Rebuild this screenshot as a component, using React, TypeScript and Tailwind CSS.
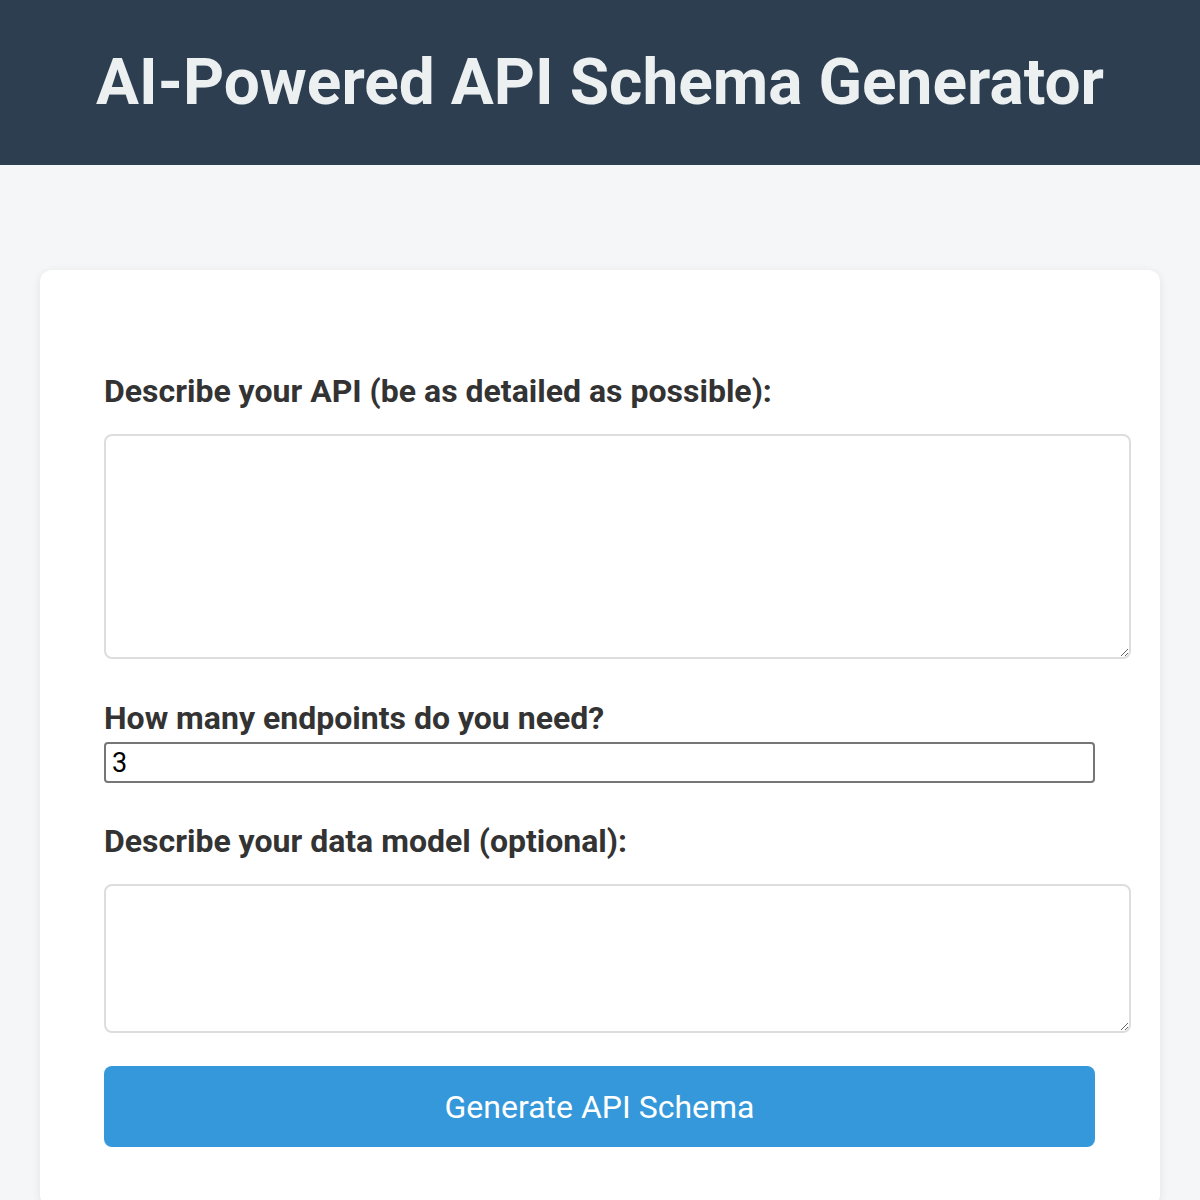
import { useState } from "react";

export default function App() {
  const [description, setDescription] = useState("");
  const [endpoints, setEndpoints] = useState("3");
  const [model, setModel] = useState("");

  return (
    <div className="min-h-[1200px] bg-[#f4f6f8] font-['Roboto',sans-serif]">
      {/* HEADER */}
      <header className="h-[165px] bg-[#2c3e50] flex items-center justify-center">
        <h1 className="text-[64px] font-bold text-[#ecf0f1] leading-none">
          AI-Powered API Schema Generator
        </h1>
      </header>

      {/* FORM CARD */}
      <main className="px-[40px] pt-[105px]">
        <div className="bg-white rounded-xl shadow-[0_2px_10px_rgba(0,0,0,0.08)] px-[64px] pt-[102px] pb-[60px]">
          <label className="block text-[32px] font-bold text-[#333] leading-[38px]">
            Describe your API (be as detailed as possible):
          </label>
          <textarea
            value={description}
            onChange={(e) => setDescription(e.target.value)}
            className="mt-[24px] block w-[1027px] h-[225px] rounded-lg border-2 border-[#ddd] bg-white p-3 text-[24px] resize-y outline-none"
          />

          <label className="mt-[40px] block text-[32px] font-bold text-[#333] leading-[38px]">
            How many endpoints do you need?
          </label>
          <input
            type="text"
            value={endpoints}
            onChange={(e) => setEndpoints(e.target.value)}
            className="mt-[5px] block w-[991px] h-[41px] rounded-[4px] border-2 border-[#767676] px-[6px] text-[27px] text-black font-['Roboto',sans-serif] outline-none"
          />

          <label className="mt-[39px] block text-[32px] font-bold text-[#333] leading-[38px]">
            Describe your data model (optional):
          </label>
          <textarea
            value={model}
            onChange={(e) => setModel(e.target.value)}
            className="mt-[24px] block w-[1027px] h-[149px] rounded-lg border-2 border-[#ddd] bg-white p-3 text-[24px] resize-y outline-none"
          />

          <button className="mt-[33px] block w-[991px] h-[81px] rounded-lg bg-[#3498db] text-white text-[32px] font-normal">
            Generate API Schema
          </button>
        </div>
      </main>
    </div>
  );
}
